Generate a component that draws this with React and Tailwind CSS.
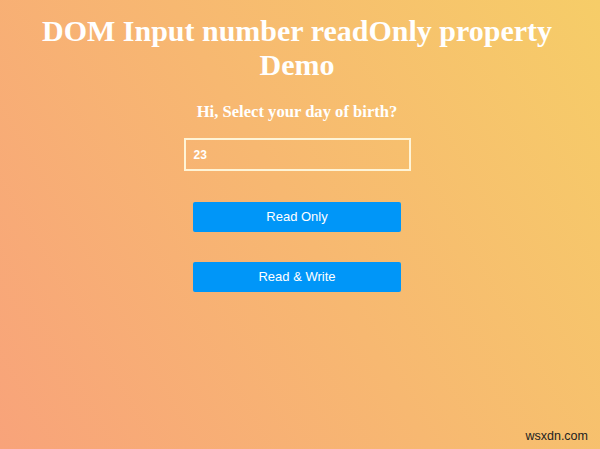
import React from "react";

export default function App() {
  return (
    <div className="relative h-[449px] w-[600px] overflow-hidden bg-[linear-gradient(60deg,#f8a37a_0%,#f6cd68_100%)] flex flex-col items-center pr-[6px]">
      <h1 className="mt-[14px] w-[540px] text-center text-[30px] font-bold leading-[34px] text-white font-['Liberation_Serif',serif]">
        DOM Input number readOnly property Demo
      </h1>
      <p className="mt-[20px] text-[16.6px] font-bold leading-[20px] text-white font-['Liberation_Serif',serif]">
        Hi, Select your day of birth?
      </p>
      <div className="mt-[16px] flex h-[33px] w-[227px] items-center border-2 border-[#fff4d6] px-[8px]">
        <span className="text-[12px] font-bold text-white font-['Liberation_Sans',sans-serif]">23</span>
      </div>
      <div className="mt-[31px] flex flex-col gap-[30px] font-['Liberation_Sans',sans-serif]">
        <button className="h-[30px] w-[208px] rounded-[2px] bg-[#0096f8] text-[13px] text-white">
          Read Only
        </button>
        <button className="h-[30px] w-[208px] rounded-[2px] bg-[#0096f8] text-[13px] text-white">
          Read &amp; Write
        </button>
      </div>
      <span className="absolute bottom-[3px] right-[12px] text-[12.5px] text-[#222] font-['Liberation_Sans',sans-serif]">
        wsxdn.com
      </span>
    </div>
  );
}
